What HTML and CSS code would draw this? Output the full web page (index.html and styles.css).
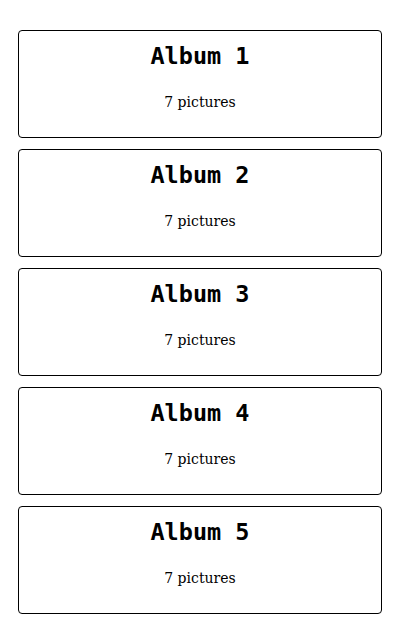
FILE: index.html
```html
<!DOCTYPE html>
<html>
<head>
<meta charset="utf-8">
<link rel="stylesheet" href="styles.css">
</head>
<body>
<div class="albums">
  <div class="card"><h2 class="title">Album 1</h2><p class="count">7 pictures</p></div>
  <div class="card"><h2 class="title">Album 2</h2><p class="count">7 pictures</p></div>
  <div class="card"><h2 class="title">Album 3</h2><p class="count">7 pictures</p></div>
  <div class="card"><h2 class="title">Album 4</h2><p class="count">7 pictures</p></div>
  <div class="card"><h2 class="title">Album 5</h2><p class="count">7 pictures</p></div>
</div>
</body>
</html>
```
FILE: styles.css
```css
html, body {
  margin: 0;
  padding: 0;
  background: #fff;
}
.albums {
  display: flex;
  flex-direction: column;
  gap: 11px;
  padding: 30px 18px;
}
.card {
  height: 108px;
  box-sizing: border-box;
  border: 1px solid #000;
  border-radius: 4px;
  display: flex;
  flex-direction: column;
  align-items: center;
  padding-top: 11px;
}
.title {
  margin: 0;
  font-family: "DejaVu Sans Mono", monospace;
  font-weight: bold;
  font-size: 23.5px;
  line-height: 28px;
  color: #000;
}
.count {
  margin: 24px 0 0;
  font-family: "DejaVu Serif", serif;
  font-size: 14px;
  color: #000;
}
```
